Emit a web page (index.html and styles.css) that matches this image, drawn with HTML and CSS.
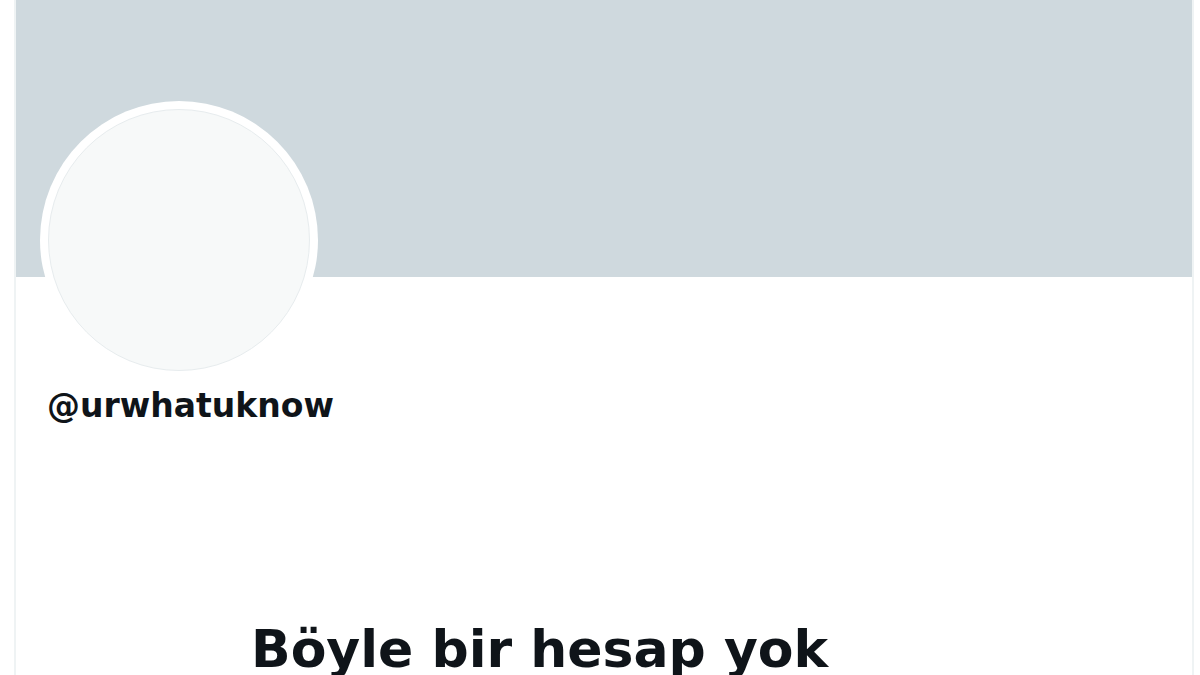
FILE: index.html
```html
<!DOCTYPE html>
<html lang="tr">

<head>
    <meta charset="UTF-8">
    <meta name="viewport" content="width=device-width, initial-scale=1.0">
    <title>@urwhatuknow</title>
    <link rel="stylesheet" href="styles.css">
</head>

<body>
    <main class="column">
        <div class="banner"></div>
        <div class="profile">
            <div class="avatar">
                <div class="avatar-inner"></div>
            </div>
            <div class="handle">@urwhatuknow</div>
        </div>
        <div class="empty">
            <h1 class="empty-title">Böyle bir hesap yok</h1>
        </div>
    </main>
</body>

</html>
```

FILE: styles.css
```css
* {
    margin: 0;
    padding: 0;
    box-sizing: border-box;
}

html,
body {
    background: #fff;
    height: 100%;
    overflow: hidden;
}

body {
    font-family: "DejaVu Sans", "Liberation Sans", sans-serif;
    color: #0f1419;
}

.column {
    margin-left: 14px;
    width: 1180px;
    min-height: 100%;
    border-left: 2px solid #eff3f4;
    border-right: 2px solid #eff3f4;
}

.banner {
    height: 277px;
    background: #cfd9de;
}

.profile {
    padding-left: 24px;
}

.avatar {
    width: 278px;
    height: 278px;
    margin-top: -176px;
    border-radius: 50%;
    background: #fff;
    padding: 8px;
}

.avatar-inner {
    width: 100%;
    height: 100%;
    border-radius: 50%;
    background: #f7f9f9;
    border: 1px solid #e7ecee;
}

.handle {
    margin-top: 7px;
    padding-left: 7px;
    font-size: 33px;
    font-weight: bold;
    line-height: 40px;
}

.empty {
    margin-top: 193px;
    padding-left: 235px;
}

.empty-title {
    font-size: 52px;
    font-weight: bold;
    line-height: 60px;
}
```
